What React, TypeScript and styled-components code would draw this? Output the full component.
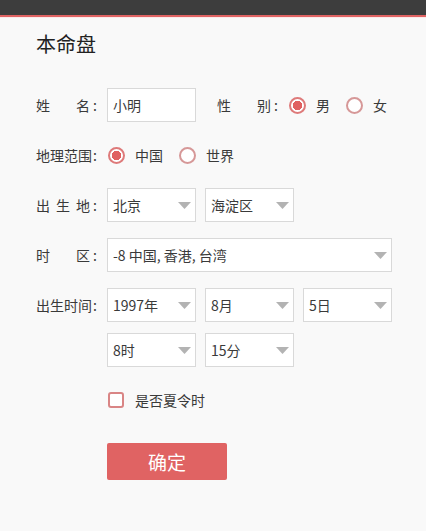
import React from "react";
import styled, { createGlobalStyle } from "styled-components";

const Global = createGlobalStyle`
  body {
    margin: 0;
    background: #f9f9f9;
    font-family: "Noto Sans CJK SC", "Noto Sans", sans-serif;
    color: #3a3a3a;
  }
`;

export default function App() {
	return (
		<Page>
			<Global />
			<TopBar />
			<Content>
				<Title>本命盘</Title>
				<Form>
					<Row>
						<Label><span>姓名</span>:</Label>
						<TextBox>小明</TextBox>
						<Label $wide><span>性别</span>:</Label>
						<Radio checked label="男" />
						<Radio label="女" />
					</Row>
					<Row>
						<Label><span>地理范围</span>:</Label>
						<Radio checked label="中国" />
						<Radio label="世界" />
					</Row>
					<Row>
						<Label><span>出生地</span>:</Label>
						<Fields>
							<Select value="北京" />
							<Select value="海淀区" />
						</Fields>
					</Row>
					<Row>
						<Label><span>时区</span>:</Label>
						<Fields>
							<Select value="-8 中国, 香港, 台湾" full />
						</Fields>
					</Row>
					<Row $top>
						<Label><span>出生时间</span>:</Label>
						<Fields>
							<Select value="1997年" />
							<Select value="8月" />
							<Select value="5日" />
							<Select value="8时" />
							<Select value="15分" />
						</Fields>
					</Row>
					<Row>
						<Spacer />
						<Check>
							<CheckBox />
							<span>是否夏令时</span>
						</Check>
					</Row>
					<Row>
						<Spacer />
						<Button>确定</Button>
					</Row>
				</Form>
			</Content>
		</Page>
	);
}

function Radio({ checked, label }: { checked?: boolean; label: string }) {
	return (
		<RadioItem>
			<RadioRing $checked={checked} />
			<span>{label}</span>
		</RadioItem>
	);
}

function Select({ value, full }: { value: string; full?: boolean }) {
	return (
		<SelectBox $full={full}>
			<span>{value}</span>
			<svg width="13" height="7" viewBox="0 0 13 7">
				<path d="M0 0 H13 L6.5 7 Z" fill="#b3b3b3" />
			</svg>
		</SelectBox>
	);
}

const Page = styled.div`
    min-height: 531px;
`;

const TopBar = styled.div`
    height: 15px;
    background: #3d3d3d;
    border-bottom: 2px solid #e06363;
    box-shadow: 0 1px 0 #fbe9e9;
`;

const Content = styled.div`
    padding: 14px 0 0 36px;
`;

const Title = styled.h1`
    margin: 0;
    font-size: 20px;
    font-weight: 400;
    line-height: 26px;
    color: #222;
`;

const Form = styled.div`
    margin-top: 31px;
    display: flex;
    flex-direction: column;
    gap: 16px;
`;

const Row = styled.div<{ $top?: boolean }>`
    display: flex;
    align-items: ${(p) => (p.$top ? "flex-start" : "center")};
    min-height: 34px;
    font-size: 14px;
`;

const Label = styled.div<{ $wide?: boolean }>`
    display: flex;
    align-items: center;
    width: 71px;
    height: 34px;
    flex-shrink: 0;
    margin-left: ${(p) => (p.$wide ? "21px" : "0")};
    white-space: nowrap;

    span {
        display: inline-block;
        width: 54px;
        text-align: justify;
        text-align-last: justify;
        margin-right: 3px;
    }
`;

const Spacer = styled.div`
    width: 71px;
    flex-shrink: 0;
`;

const TextBox = styled.div`
    box-sizing: border-box;
    width: 89px;
    height: 34px;
    padding-left: 5px;
    display: flex;
    align-items: center;
    background: #fff;
    border: 1px solid #d9d9d9;
`;

const RadioItem = styled.label`
    display: flex;
    align-items: center;
    gap: 10px;
    margin-right: 15px;
    margin-left: 1px;
`;

const RadioRing = styled.span<{ $checked?: boolean }>`
    box-sizing: border-box;
    width: 17px;
    height: 17px;
    border-radius: 50%;
    border: 2px solid ${(p) => (p.$checked ? "#de7a7a" : "#d69898")};
    background: ${(p) =>
		p.$checked ? "radial-gradient(circle, #e06060 0 4.5px, #fff 5px)" : "#fff"};
`;

const Fields = styled.div`
    display: flex;
    flex-wrap: wrap;
    width: 285px;
    column-gap: 9px;
    row-gap: 11px;
`;

const SelectBox = styled.div<{ $full?: boolean }>`
    box-sizing: border-box;
    width: ${(p) => (p.$full ? "285px" : "89px")};
    height: 34px;
    padding: 0 4px 0 5px;
    display: flex;
    align-items: center;
    justify-content: space-between;
    background: #fff;
    border: 1px solid #d9d9d9;
    white-space: nowrap;

    svg {
        flex-shrink: 0;
    }
`;

const Check = styled.label`
    display: flex;
    align-items: center;
    gap: 11px;
    padding-left: 1px;
`;

const CheckBox = styled.span`
    box-sizing: border-box;
    width: 16px;
    height: 16px;
    border: 2px solid #d98585;
    border-radius: 3px;
    background: #fff;
`;

const Button = styled.button`
    margin-top: 10px;
    width: 120px;
    height: 37px;
    border: none;
    border-radius: 2px;
    background: #e06363;
    color: #fff;
    font-family: inherit;
    font-size: 19px;
    cursor: pointer;
`;
